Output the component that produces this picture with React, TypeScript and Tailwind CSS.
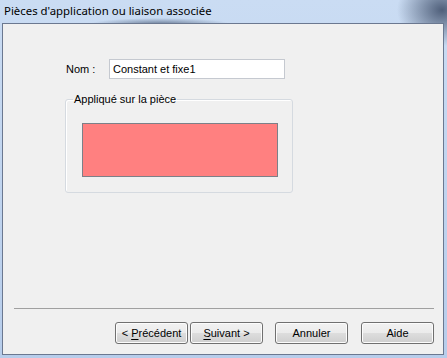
const buttons = [
  { label: "< ", key: "P", rest: "récédent", ml: "ml-0" },
  { label: "", key: "S", rest: "uivant >", ml: "ml-[2px]" },
  { label: "Annuler", key: "", rest: "", ml: "ml-[12px]" },
  { label: "Aide", key: "", rest: "", ml: "ml-[13px]" },
];

export default function App() {
  return (
    <div className="w-[447px] h-[358px] overflow-hidden flex flex-col bg-[#bdd2ee] bg-[radial-gradient(ellipse_45px_36px_at_442px_10px,#4f5f7a,transparent),radial-gradient(ellipse_70px_6px_at_160px_24px,#6d7f99,transparent),linear-gradient(to_bottom,#cadcf3,#b7cdeb)] font-['Liberation_Sans',Arial,sans-serif] text-[11px] text-black">
      {/* title bar */}
      <div className="h-[23px] shrink-0 pl-[4px] pt-[3px] font-['Noto_Sans',sans-serif] text-[11.4px] leading-[16px] text-black">
        Pièces d'application ou liaison associée
      </div>

      {/* client area */}
      <div className="ml-[2px] w-[442px] h-[332px] shrink-0 border border-[#6b7890] bg-[#f0f0f0] flex flex-col">
        <div className="mt-[35px] ml-[63px] flex items-center h-[20px]">
          <span className="w-[43px]">Nom :</span>
          <div className="w-[176px] h-[20px] border border-[#c5c9d0] bg-white pl-[3px] flex items-center">
            Constant et fixe1
          </div>
        </div>

        <fieldset className="mt-[14px] ml-[62px] w-[228px] border border-[#d5dae0] rounded-[3px] shadow-[inset_1px_1px_0_#fff]">
          <legend className="ml-[7px] px-[1px] leading-[13px]">Appliqué sur la pièce</legend>
          <div className="mt-[17px] mb-[15px] ml-[16px] w-[196px] h-[54px] bg-[#ff8080] border border-[#7c8088]" />
        </fieldset>

        <div className="flex-1" />

        <div className="ml-[11px] mr-[9px] h-[1px] bg-[#a0a0a0]" />

        <div className="mt-[13px] mb-[10px] mr-[9px] flex justify-end">
          {buttons.map((b, i) => (
            <button
              key={i}
              className={`${b.ml} w-[73px] h-[22px] rounded-[3px] border border-[#707070] bg-[linear-gradient(to_bottom,#f2f2f2_0%,#ebebeb_50%,#dddddd_51%,#cfcfcf_100%)] shadow-[inset_0_0_0_1px_#fcfcfc] flex items-center justify-center leading-none`}
            >
              <span className="whitespace-pre">
                {b.label}
                {b.key && <span className="underline underline-offset-2">{b.key}</span>}
                {b.rest}
              </span>
            </button>
          ))}
        </div>
      </div>
    </div>
  );
}
